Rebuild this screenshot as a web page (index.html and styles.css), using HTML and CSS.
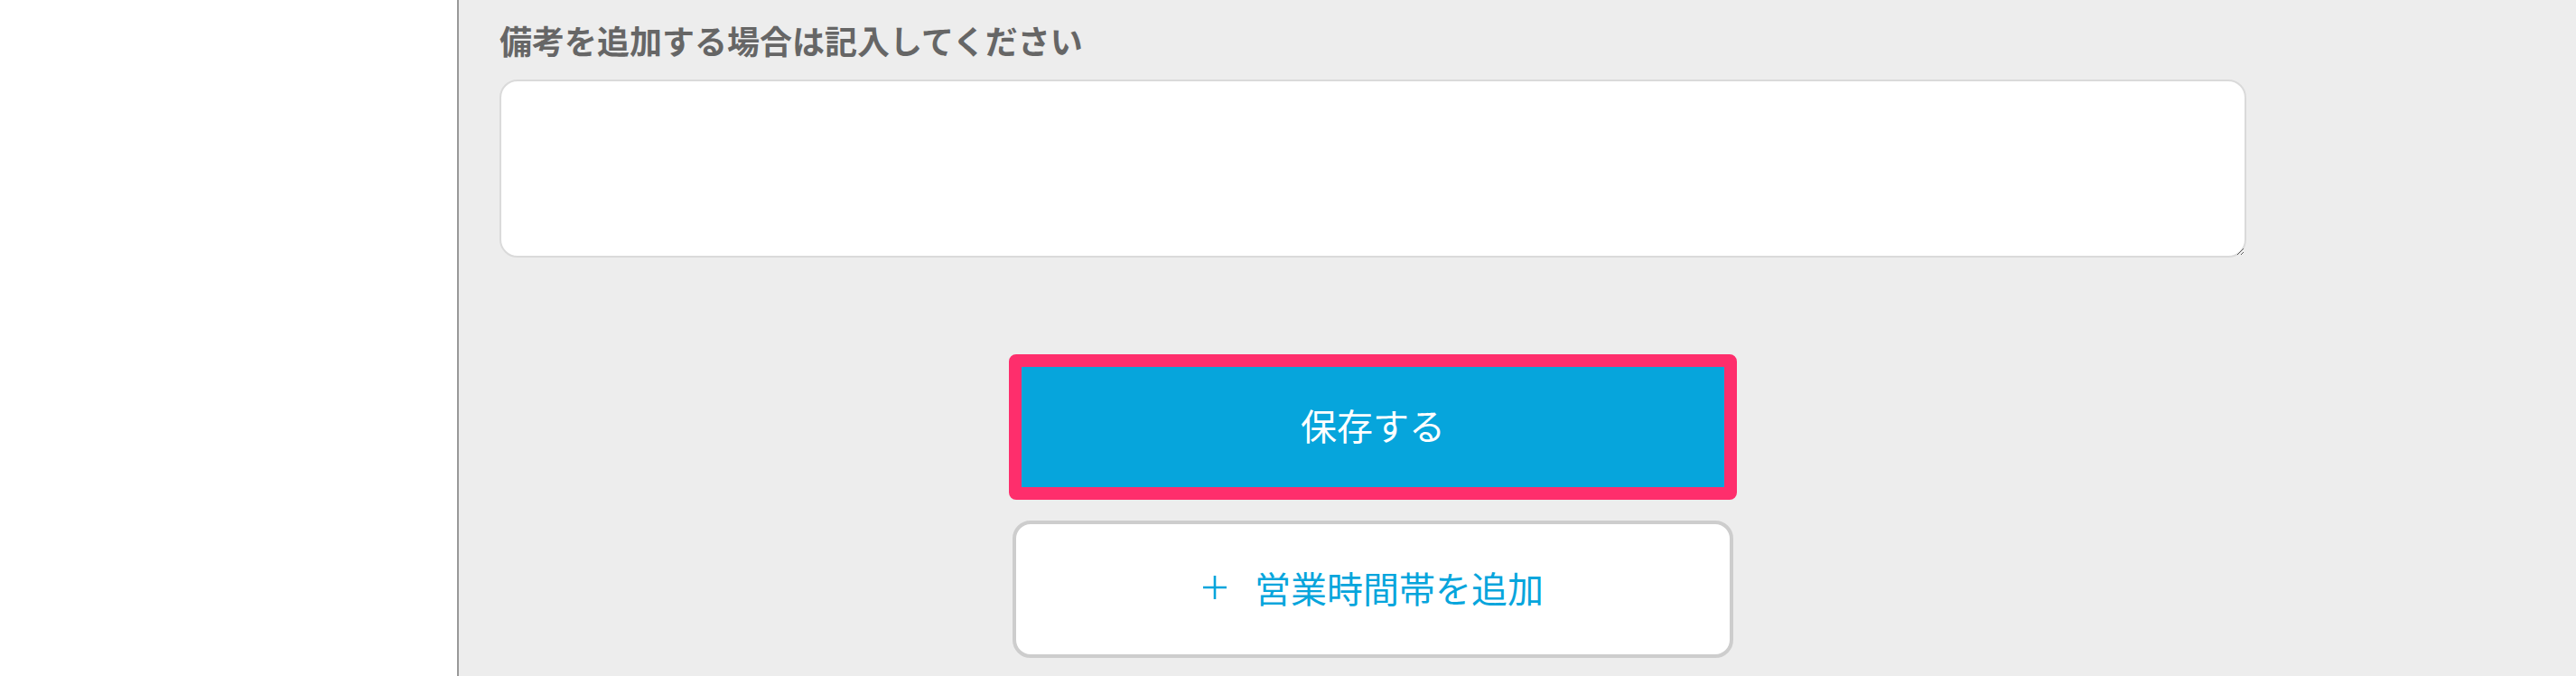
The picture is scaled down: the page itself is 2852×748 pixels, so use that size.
FILE: index.html
```html
<!DOCTYPE html>
<html lang="ja">
<head>
    <meta charset="UTF-8">
    <meta name="viewport" content="width=device-width, initial-scale=1.0">
    <link rel="stylesheet" href="styles.css">
    <title>営業時間</title>
</head>
<body>

    <aside class="sidebar"></aside>

    <main class="content">
        <div class="form">
            <label class="field-label" for="note">備考を追加する場合は記入してください</label>
            <textarea id="note" class="note"></textarea>

            <div class="actions">
                <button class="btn-save">保存する</button>
                <button class="btn-add">
                    <svg class="plus" width="28" height="28" viewBox="0 0 28 28">
                        <path d="M14 1 V27 M1 14 H27" stroke="currentColor" stroke-width="2.6" fill="none"/>
                    </svg>
                    営業時間帯を追加
                </button>
            </div>
        </div>
    </main>

</body>
</html>
```

FILE: styles.css
```css
body {
    margin: 0;
    display: flex;
    height: 100vh;
    overflow: hidden;
    font-family: 'Noto Sans CJK JP', 'Noto Sans', sans-serif;
    background-color: #fff;
}

.sidebar {
    width: 506px;
    flex-shrink: 0;
    background-color: #fff;
    border-right: 2px solid #999;
}

.content {
    flex: 1;
    background-color: #ededed;
    padding: 26px 0 0 45px;
}

.form {
    width: 1934px;
    display: flex;
    flex-direction: column;
}

.field-label {
    font-size: 36px;
    line-height: 36px;
    font-weight: bold;
    color: #666;
}

.note {
    margin-top: 26px;
    height: 197px;
    box-sizing: border-box;
    border: 2px solid #dadada;
    border-radius: 20px;
    background-color: #fff;
    font-family: inherit;
}

.actions {
    display: flex;
    flex-direction: column;
    align-items: center;
    margin-top: 107px;
}

.actions button {
    font-family: inherit;
    cursor: pointer;
    box-sizing: border-box;
}

.btn-save {
    width: 806px;
    height: 161px;
    border: 14px solid #fe2e6c;
    border-radius: 8px;
    background-color: #06a5dc;
    color: #fff;
    font-size: 40px;
    padding: 0 0 6px;
}

.btn-add {
    margin-top: 23px;
    width: 798px;
    height: 152px;
    border: 4px solid #cdcdcd;
    border-radius: 20px;
    background-color: #fff;
    color: #06a5dc;
    font-size: 40px;
    display: flex;
    align-items: center;
    justify-content: center;
    gap: 30px;
    padding: 0 0 4px;
}

.plus {
    flex-shrink: 0;
}
```
